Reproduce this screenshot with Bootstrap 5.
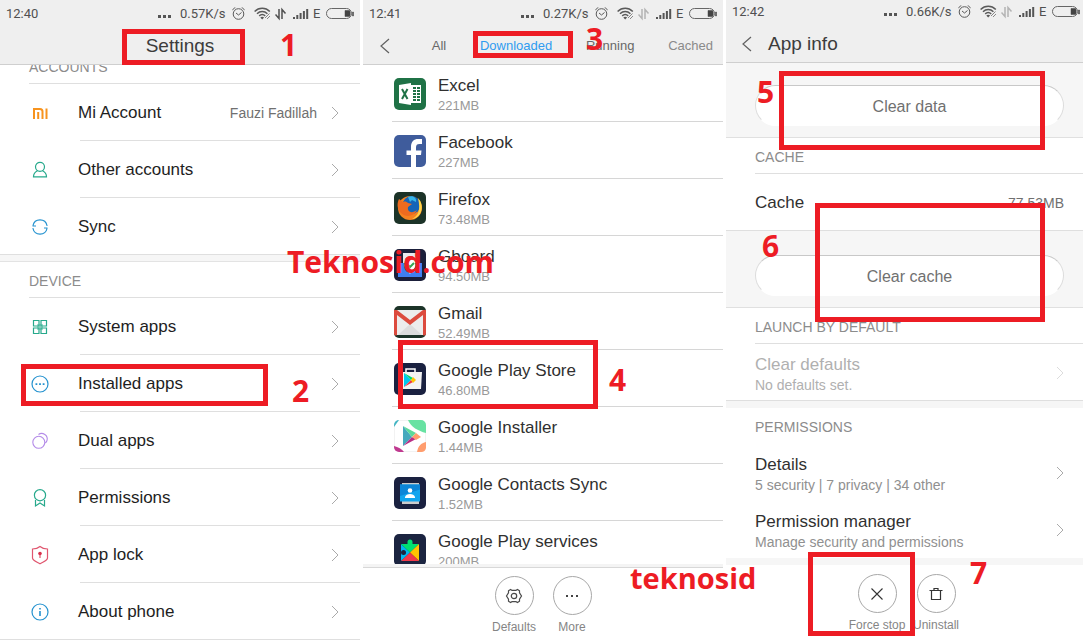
<!DOCTYPE html>
<html lang="en">
<head>
<meta charset="utf-8">
<meta name="viewport" content="width=device-width, initial-scale=1">
<title>Clear Play Store cache</title>
<link href="https://cdn.jsdelivr.net/npm/bootstrap@5.3.0/dist/css/bootstrap.min.css" rel="stylesheet">
<style>
body{font-family:"Liberation Sans",Arial,sans-serif;font-size:17px;line-height:20px;color:#1e1e1e;background:#fff}
a,a:hover{color:inherit;text-decoration:none}
svg{display:block;flex:none}
.phones{display:grid;grid-template-columns:360fr 360fr 357fr;gap:3px;min-height:100vh}
.phone{position:relative;min-width:0}
.topbar{position:relative;z-index:1;background:#efefef;border-bottom:1px solid #cfcfcf;height:65px}
.topbar.short{height:63px}
.status{height:27px;padding:0 6px;font:13px/26px Roboto,sans-serif;color:#505050}
.short .status{height:23px;line-height:22px;padding-right:3px}
.short .status svg{height:22px}
.dots{width:22px}
.speed{width:52px}
.net{width:13px}
.titlebar{height:37px;font-size:19px;color:#3c3c3c}
.short .titlebar{height:41px;padding-left:16px}
.tabs{font-size:13px;color:#686868;height:37px;padding:0 10px 0 17px}
.tabs .active{color:#2f9cf0}
.tabs .fade-end{color:#8a8a8a}
.label-row{height:36px;padding:1px 0 0 29px;font-size:14px;color:#8c8c8c;position:relative}
.scrolled{margin-top:-17px}
.rule::after,.item::after{content:"";position:absolute;left:29px;right:0;bottom:0;height:1px;background:#dfdfdf}
.item{position:relative;height:57px}
.settings .item{padding:0 21px 0 29px}
.settings .item::after{left:80px}
.settings .item.last::after{left:0}
.settings .ico{width:49px}
.note{font-size:14px;color:#707070}
.settings .note{margin-right:14px}
.band{background:#f6f6f6;height:7px}
.band.lined{border-bottom:1px solid #e3e3e3}
.apps{flex:1 1 0;overflow:hidden}
.apps .item{padding:0 0 0 31px;gap:12px}
.apps .item::after{background:#d6d6d6}
.apps .txt,.info .txt{color:#303030}
.pair{padding-top:4px}
.sub{font-size:13px;color:#999}
.info .sub{font-size:14px;color:#909090}
.info .item{padding:0 19px 0 29px}
.info .item.plain::after{display:none}
.info .item.last::after{left:0}
.info .dim .txt,.info .dim .sub{color:#b0b0b0}
.dim svg{opacity:.4}
.zone{background:#f6f6f6;border-bottom:1px solid #e0e0e0;padding:0 19px 11px 29px;display:flex;align-items:flex-end}
.zone.one{height:75px}
.zone.two{height:77px}
.pill{width:100%;height:41px;border:1px solid #dcdcdc;border-top-color:#c8c8c8;border-bottom-color:#fff;border-radius:21px;background:#fff;font-size:16px;color:#707070;padding:2px 0 0}
.shelf{height:78px;border-top:3px solid #f4f4f4}
.shelf::before{content:"";position:absolute;left:0;right:0;height:1px;background:#d8d8d8}
.shelf,.shelf2{font-size:12px;line-height:14px;color:#858585}
.tool{border:0;background:none;width:58px;padding:9px 0 0;color:inherit;display:flex;flex-direction:column;align-items:center;white-space:nowrap}
.ring{width:39px;height:39px;border:1px solid #a8a8a8;border-radius:50%;display:grid;place-items:center;margin-bottom:5px}
.shelf2{padding-left:4px;gap:1px}
/* tutorial marks laid over the three screens */
.mark-box{position:absolute;z-index:3;border:5px solid #ed1c24;pointer-events:none}
.mark-text{position:absolute;z-index:3;color:#ed1c24;font:bold 30px/30px "Open Sans","Noto Sans",sans-serif;white-space:nowrap;pointer-events:none}
#b1{left:122px;top:29px;width:123px;height:36px}
#b2{left:21px;top:364px;width:247px;height:42px}
#b3{left:110px;top:31px;width:100px;height:27px}
#b4{left:35px;top:340px;width:200px;height:69px}
#b5{left:53px;top:71px;width:266px;height:79px}
#b6{left:89px;top:203px;width:230px;height:119px}
#b7{left:82px;top:552px;width:107px;height:84px}
#n1{left:280px;top:30px}
#n2{left:292px;top:376px}
#n3{left:223px;top:24px}
#n4{left:246px;top:365px}
#n5{left:31px;top:77px}
#n6{left:36px;top:231px}
#n7{left:244px;top:558px}
#w1{left:287px;top:247px}
#w2{left:267px;top:563px;font-size:29px}
</style>
</head>
<body>
<svg width="0" height="0" class="position-absolute" aria-hidden="true">
<defs>
<symbol id="alarm" viewBox="0 0 22 26"><g fill="none" stroke="#5a5a5a"><circle cx="6.500" cy="13" r="5.300"/><path d="M4 12l2.500 2L9.500 11.500M.8 9.200C1 7.800 2 7 3.300 6.800M12.200 9.200C12 7.800 11 7 9.700 6.800"/></g></symbol>
<symbol id="wifi" viewBox="0 0 21 26"><g fill="none" stroke="#5a5a5a" stroke-width="1.500"><path d="M.6 10.500C5 6.200 11.500 6.200 15.800 10.500M3 12.700c3-3 7.400-3 10.400 0M5.200 14.900c1.800-1.700 4.200-1.700 6 0"/></g><path d="M6.300 16.500c1.200-1 2.600-1 3.800 0l-1.900 2z" fill="#5a5a5a"/><path d="M11 17l4.500-4.500M13 18l3-3" stroke="#888"/></symbol>
<symbol id="arrows" viewBox="0 0 18 26"><path d="M4 8v9.500L.5 13.500M7 18V8.500l3.500 4" fill="none" stroke="currentColor" stroke-width="1.500"/></symbol>
<symbol id="signal" viewBox="0 0 20 26"><path d="M0 16h2v2H0zM3.300 14h2v4h-2zM6.600 12h2v6h-2zM9.900 10h2v8h-2zM13.200 8h2v10h-2z" fill="#555"/></symbol>
<symbol id="batt" viewBox="0 0 28 26"><rect x=".5" y="7.500" width="25" height="10" rx="5" fill="none" stroke="#666"/><path d="M26.500 11v4h1v-4zM19 9.500h4.500c1 1 1 5 0 6H19z" fill="#444" stroke="#444" stroke-width=".5"/></symbol>
<symbol id="chev" viewBox="0 0 8 14"><path d="M1 1l6 6-6 6" fill="none" stroke="#aaa"/></symbol>
<symbol id="back" viewBox="0 0 10 16"><path d="M9 1L1 8l8 7" fill="none" stroke="#606060" stroke-width="1.200"/></symbol>
</defs></svg>

<main class="phones">
<section class="phone settings" aria-label="Settings">
<header class="topbar">
<div class="status d-flex align-items-center"><span class="me-auto">12:40</span><svg class="dots" height="26"><path d="M0 14h3v3H0zM5 14h3v3H5zM10 14h3v3h-3z" fill="#555"/></svg><span class="speed">0.57K/s</span><svg width="22" height="26"><use href="#alarm"/></svg><svg width="21" height="26"><use href="#wifi"/></svg><svg width="18" height="26" color="#505050"><use href="#arrows"/></svg><svg width="20" height="26"><use href="#signal"/></svg><span class="net">E</span><svg width="28" height="26"><use href="#batt"/></svg></div>
<div class="titlebar d-flex align-items-center justify-content-center">Settings</div>
</header>
<div class="label-row rule scrolled d-flex align-items-center">ACCOUNTS</div>
<a href="#" class="item d-flex align-items-center"><span class="ico"><svg width="22" height="22" viewBox="0 0 22 22"><path d="M5 17V7h6c2 0 2.500 1 2.500 2.500V17M9.200 10v7M17.500 6.500V17" fill="none" stroke="#f7931e" stroke-width="2"/></svg></span><span class="me-auto">Mi Account</span><span class="note">Fauzi Fadillah</span><svg width="8" height="14"><use href="#chev"/></svg></a>
<a href="#" class="item d-flex align-items-center"><span class="ico"><svg width="22" height="22" viewBox="0 0 22 22"><g fill="none" stroke="#27a98c" stroke-width="1.200"><circle cx="11" cy="7.800" r="4.500"/><path d="M8.500 11.800C6 13 4.500 15 4.500 17.800h13c0-2.800-1.500-4.800-4-6"/></g></svg></span><span class="me-auto">Other accounts</span><svg width="8" height="14"><use href="#chev"/></svg></a>
<a href="#" class="item last d-flex align-items-center"><span class="ico"><svg width="22" height="22" viewBox="0 0 22 22"><g fill="none" stroke="#2492cf" stroke-width="1.200"><path d="M4 9.500c1.500-7.500 12.500-7.500 14 0M18 12.500c-1.500 7.500-12.500 7.500-14 0M3.500 10h3.500M3.500 12.500h1M15 12h3.500M17.500 9.500h1"/></g></svg></span><span class="me-auto">Sync</span><svg width="8" height="14"><use href="#chev"/></svg></a>
<div class="band lined"></div>
<div class="label-row rule d-flex align-items-center">DEVICE</div>
<a href="#" class="item d-flex align-items-center"><span class="ico"><svg width="22" height="22" viewBox="0 0 22 22"><path d="M8 8h6v6H8z" fill="#a5dccf"/><g fill="none" stroke="#27a98c" stroke-width="1.200"><path d="M4.500 4.500H10V10H4.500zM12 4.500h5.500V10H12zM4.500 12H10v5.500H4.500zM12 12h5.500v5.500H12z"/></g></svg></span><span class="me-auto">System apps</span><svg width="8" height="14"><use href="#chev"/></svg></a>
<a href="#" class="item d-flex align-items-center"><span class="ico"><svg width="22" height="22" viewBox="0 0 22 22"><circle cx="11" cy="11" r="8" fill="none" stroke="#2492cf" stroke-width="1.200"/><path d="M6.500 10.300H8.300v1.600H6.500zM10.100 10.300h1.800v1.600h-1.800zM13.700 10.300h1.800v1.600h-1.800z" fill="#2492cf"/></svg></span><span class="me-auto">Installed apps</span><svg width="8" height="14"><use href="#chev"/></svg></a>
<a href="#" class="item d-flex align-items-center"><span class="ico"><svg width="22" height="22" viewBox="0 0 22 22"><g fill="none" stroke="#b48be8" stroke-width="1.100"><circle cx="9.800" cy="12.300" r="6"/><path d="M9.500 4.500c4-3 10 1 8.500 6-.3 1.200-1 2-1.800 2.700"/></g></svg></span><span class="me-auto">Dual apps</span><svg width="8" height="14"><use href="#chev"/></svg></a>
<a href="#" class="item d-flex align-items-center"><span class="ico"><svg width="22" height="22" viewBox="0 0 22 22"><g fill="none" stroke="#27a98c" stroke-width="1.200"><circle cx="11" cy="8.200" r="5.600"/><path d="M6.500 13v6l4.500-3 4.500 3v-6"/></g></svg></span><span class="me-auto">Permissions</span><svg width="8" height="14"><use href="#chev"/></svg></a>
<a href="#" class="item d-flex align-items-center"><span class="ico"><svg width="22" height="22" viewBox="0 0 22 22"><path d="M11 2.500c2 1.800 4.500 2.500 7.500 2.500v9c0 2.500-4.500 4-7.500 5.800C8 18 3.500 16.500 3.500 14V5C6.500 5 9 4.300 11 2.500z" fill="none" stroke="#e0566f" stroke-width="1.200"/><circle cx="11" cy="9.500" r="1.800" fill="#d9304c"/><path d="M10.500 10h1v4h-1z" fill="#d9304c"/></svg></span><span class="me-auto">App lock</span><svg width="8" height="14"><use href="#chev"/></svg></a>
<a href="#" class="item last d-flex align-items-center"><span class="ico"><svg width="22" height="22" viewBox="0 0 22 22"><circle cx="11" cy="11" r="8" fill="none" stroke="#2492cf" stroke-width="1.200"/><path d="M10.200 7h1.600v1.600h-1.600zM10.200 10h1.600v5h-1.600z" fill="#2492cf"/></svg></span><span class="me-auto">About phone</span><svg width="8" height="14"><use href="#chev"/></svg></a>
<span class="mark-box" id="b1"></span><span class="mark-box" id="b2"></span>
<span class="mark-text" id="n1">1</span><span class="mark-text" id="n2">2</span>
<span class="mark-text" id="w1">Teknosid.com</span>
</section>

<section class="phone d-flex flex-column" aria-label="Downloaded apps">
<header class="topbar">
<div class="status d-flex align-items-center"><span class="me-auto">12:41</span><svg class="dots" height="26"><path d="M0 14h3v3H0zM5 14h3v3H5zM10 14h3v3h-3z" fill="#555"/></svg><span class="speed">0.27K/s</span><svg width="22" height="26"><use href="#alarm"/></svg><svg width="21" height="26"><use href="#wifi"/></svg><svg width="18" height="26" color="#b4b4b4"><use href="#arrows"/></svg><svg width="20" height="26"><use href="#signal"/></svg><span class="net">E</span><svg width="28" height="26"><use href="#batt"/></svg></div>
<nav class="tabs d-flex align-items-center justify-content-between"><a href="#" aria-label="Back"><svg width="10" height="16"><use href="#back"/></svg></a><a href="#" class="ps-2">All</a><a href="#" class="active">Downloaded</a><a href="#">Running</a><a href="#" class="fade-end">Cached</a></nav>
</header>
<div class="apps">
<a href="#" class="item d-flex align-items-center"><svg width="32" height="32" viewBox="0 0 32 32"><rect width="32" height="32" rx="5" fill="#1f7246"/><path d="M17 7h10v18H17z" fill="#fff"/><path d="M19 9h3v2h-3zM23 9h3v2h-3zM19 12h3v2h-3zM23 12h3v2h-3zM19 15h3v2h-3zM23 15h3v2h-3zM19 18h3v2h-3zM23 18h3v2h-3zM19 21h3v2h-3zM23 21h3v2h-3z" fill="#1f7246"/><path d="M5 7l12-2v22L5 25z" fill="#fff"/><path d="M8 11l5.500 10M13.500 11L8 21" stroke="#1f7246" stroke-width="2"/></svg><span class="pair"><span class="txt d-block">Excel</span><span class="sub d-block">221MB</span></span></a>
<a href="#" class="item d-flex align-items-center"><svg width="32" height="32" viewBox="0 0 32 32"><rect width="32" height="32" rx="5" fill="#3f5c9c"/><path d="M17 32V20h-4.500v-4.500H17V12c0-5.500 3-8 7-8h4v5h-2.500C23 9 22 10 22 12.500v3h5.500L27 20h-5v12z" fill="#fff"/></svg><span class="pair"><span class="txt d-block">Facebook</span><span class="sub d-block">227MB</span></span></a>
<a href="#" class="item d-flex align-items-center"><svg width="32" height="32" viewBox="0 0 32 32"><rect width="32" height="32" rx="5" fill="#1c3328"/><circle cx="16" cy="16" r="12" fill="#f58220"/><circle cx="17.500" cy="13" r="9" fill="#1565b8"/><path d="M14 5c5-2 9 1 8 5l-4-2-2 2z" fill="#37b6e8"/><path d="M24 6c7 7 4 20-6 21 6-3 9-8 6-21z" fill="#ffd54a"/><path d="M5 7l4 3c2-1 4 0 5 1l4 1-4 3c-1 5 4 7 9 3-3 7-12 8-17 2-3-4-3-9-1-13z" fill="#ee6b1f"/></svg><span class="pair"><span class="txt d-block">Firefox</span><span class="sub d-block">73.48MB</span></span></a>
<a href="#" class="item d-flex align-items-center"><svg width="32" height="32" viewBox="0 0 32 32"><rect width="32" height="32" rx="5" fill="#1b1f3a"/><path d="M9 4h14v12H9z" fill="#e8e8ee"/><path d="M4 14h24v14H4z" fill="#3f7ff0"/><path d="M12 11a5 5 0 0 1 8-1" stroke="#ea4335" stroke-width="3" fill="none"/><path d="M10.500 16a5.500 5.500 0 0 1 11 0c0 4-3.500 5-5.500 9-2-4-5.500-5-5.500-9z" fill="#fff"/><path d="M12 14l4 4 4-4" fill="none" stroke="#34a853" stroke-width="2"/></svg><span class="pair"><span class="txt d-block">Gboard</span><span class="sub d-block">94.50MB</span></span></a>
<a href="#" class="item d-flex align-items-center"><svg width="32" height="32" viewBox="0 0 32 32"><rect width="32" height="32" rx="5" fill="#1c3328"/><path d="M1 4h30v24a2 2 0 0 1-2 1H3a2 2 0 0 1-2-1z" fill="#ececec"/><path d="M4 29l12-11 12 11z" fill="#dcdcdc"/><path d="M0 4h3l13 10L29 4h3v24a2 2 0 0 1-3 1V9L16 19 3 9v20a2 2 0 0 1-3-1z" fill="#dc4b3e"/></svg><span class="pair"><span class="txt d-block">Gmail</span><span class="sub d-block">52.49MB</span></span></a>
<a href="#" class="item d-flex align-items-center"><svg width="32" height="32" viewBox="0 0 32 32"><rect width="32" height="32" rx="5" fill="#1a2140"/><path d="M12 9V6h9v3" fill="none" stroke="#fff" stroke-width="1.500"/><path d="M5 9h23l-1 17H6z" fill="#f3f3f3"/><path d="M10 10v14l7-7z" fill="#00c8f0"/><path d="M10 10l7 7 2-2z" fill="#00d676"/><path d="M10 24l7-7 2 2z" fill="#f0384a"/><path d="M19 14l3 3-3 3-2-3z" fill="#ffc400"/></svg><span class="pair"><span class="txt d-block">Google Play Store</span><span class="sub d-block">46.80MB</span></span></a>
<a href="#" class="item d-flex align-items-center"><svg width="32" height="32" viewBox="0 0 32 32"><rect x=".5" y=".5" width="31" height="31" rx="5" fill="#fff" stroke="#f2f2f2"/><path d="M14 0h13a5 5 0 0 1 5 5v8C24 11 17 7 14 0z" fill="#68e2a2"/><path d="M0 5a5 5 0 0 1 5-5L0 7z" fill="#43b5c3"/><path d="M32 22v6a5 5 0 0 1-5 4h-4c1-6 4-9 9-10z" fill="#ff9d6e"/><path d="M0 26c4 1 8 3 10 6H5a5 5 0 0 1-5-5z" fill="#c03a90"/><path d="M9 6v20l9-9z" fill="#45a9bd"/><path d="M9 6l9 11 4-4z" fill="#5bd99a"/><path d="M9 26l9-9 4 2z" fill="#b82f86"/><path d="M18 17l4-4 5 4-5 3z" fill="#ff9d6e"/></svg><span class="pair"><span class="txt d-block">Google Installer</span><span class="sub d-block">1.44MB</span></span></a>
<a href="#" class="item d-flex align-items-center"><svg width="32" height="32" viewBox="0 0 32 32"><rect width="32" height="32" rx="5" fill="#1a2140"/><path d="M8 6h17v21H8z" fill="#ccc"/><path d="M6 7.500h20v17H6z" fill="#12a5ee"/><path d="M6 7.500h20v5L6 19z" fill="#0d86d8"/><circle cx="16" cy="13.500" r="2.300" fill="#fff"/><path d="M11 21v-1c1-4 9-4 10 0v1z" fill="#fff"/></svg><span class="pair"><span class="txt d-block">Google Contacts Sync</span><span class="sub d-block">1.52MB</span></span></a>
<a href="#" class="item d-flex align-items-center"><svg width="32" height="32" viewBox="0 0 32 32"><rect width="32" height="32" rx="5" fill="#1b2440"/><path d="M7 10l9 8.500L7 27z" fill="#00b8f0"/><path d="M7 10h6.500V8a2.500 2.500 0 1 1 5 0v2H25l-9 8.500z" fill="#00e070"/><path d="M25 10v17l-9-8.500z" fill="#ffc400"/><path d="M7 27l9-8.500 9 8.500z" fill="#f0384a"/><circle cx="9.500" cy="18.500" r="2.500" fill="#1b2440"/></svg><span class="pair"><span class="txt d-block">Google Play services</span><span class="sub d-block">200MB</span></span></a>
</div>
<footer class="shelf d-flex justify-content-center">
<button type="button" class="tool"><span class="ring"><svg width="18" height="18" viewBox="0 0 18 18"><g fill="none" stroke="#4a4a4a" stroke-width="1.200"><circle cx="9" cy="9" r="2.700"/><path d="M5.500 2.500l1.500.8h4l1.500-.8 2 1.300v2L16.500 9l-2 3.200v2l-2 1.300-1.500-.8H7l-1.500.8-2-1.300v-2L1.500 9l2-3.200v-2z"/></g></svg></span>Defaults</button>
<button type="button" class="tool"><span class="ring"><svg width="14" height="14" viewBox="0 0 14 14"><path d="M1 6h2v2H1zM6 6h2v2H6zM11 6h2v2h-2z" fill="#444"/></svg></span>More</button>
</footer>
<span class="mark-box" id="b3"></span><span class="mark-box" id="b4"></span>
<span class="mark-text" id="n3">3</span><span class="mark-text" id="n4">4</span>
<span class="mark-text" id="w2">teknosid</span>
</section>

<section class="phone info" aria-label="App info">
<header class="topbar short">
<div class="status d-flex align-items-center"><span class="me-auto">12:42</span><svg class="dots" viewBox="0 2 22 22"><path d="M0 14h3v3H0zM5 14h3v3H5zM10 14h3v3h-3z" fill="#555"/></svg><span class="speed">0.66K/s</span><svg width="22" height="26"><use href="#alarm" y="-2" height="26"/></svg><svg width="21" height="26"><use href="#wifi" y="-2" height="26"/></svg><svg width="18" height="26" color="#b4b4b4"><use href="#arrows" y="-2" height="26"/></svg><svg width="20" height="26"><use href="#signal" y="-2" height="26"/></svg><span class="net">E</span><svg width="28" height="26"><use href="#batt" y="-2" height="26"/></svg></div>
<div class="titlebar d-flex align-items-center gap-3"><a href="#" aria-label="Back"><svg width="10" height="16"><use href="#back"/></svg></a>App info</div>
</header>
<div class="zone one"><button type="button" class="pill">Clear data</button></div>
<div class="label-row rule d-flex align-items-center">CACHE</div>
<div class="item last d-flex align-items-center"><span class="txt me-auto">Cache</span><span class="note">77.53MB</span></div>
<div class="zone two"><button type="button" class="pill">Clear cache</button></div>
<div class="label-row rule d-flex align-items-center">LAUNCH BY DEFAULT</div>
<a href="#" class="item last dim d-flex align-items-center"><span class="pair me-auto"><span class="txt d-block">Clear defaults</span><span class="sub d-block">No defaults set.</span></span><svg width="8" height="14"><use href="#chev"/></svg></a>
<div class="band"></div>
<div class="label-row d-flex align-items-center">PERMISSIONS</div>
<a href="#" class="item plain d-flex align-items-center"><span class="pair me-auto"><span class="txt d-block">Details</span><span class="sub d-block">5 security | 7 privacy | 34 other</span></span><svg width="8" height="14"><use href="#chev"/></svg></a>
<a href="#" class="item plain d-flex align-items-center"><span class="pair me-auto"><span class="txt d-block">Permission manager</span><span class="sub d-block">Manage security and permissions</span></span><svg width="8" height="14"><use href="#chev"/></svg></a>
<div class="band"></div>
<footer class="shelf2 d-flex justify-content-center">
<button type="button" class="tool"><span class="ring"><svg width="14" height="14" viewBox="0 0 14 14"><path d="M1.500 1.500l11 11M12.500 1.500l-11 11" stroke="#333" stroke-width="1.100"/></svg></span>Force stop</button>
<button type="button" class="tool"><span class="ring"><svg width="14" height="14" viewBox="0 0 14 14"><path d="M.5 3.500h13M5 3V1.500h4V3M2.500 3.500v9h9v-9" fill="none" stroke="#333" stroke-width="1.200"/></svg></span>Uninstall</button>
</footer>
<span class="mark-box" id="b5"></span><span class="mark-box" id="b6"></span><span class="mark-box" id="b7"></span>
<span class="mark-text" id="n5">5</span><span class="mark-text" id="n6">6</span><span class="mark-text" id="n7">7</span>
</section>
</main>
<script src="https://cdn.jsdelivr.net/npm/bootstrap@5.3.0/dist/js/bootstrap.bundle.min.js"></script>
</body>
</html>
